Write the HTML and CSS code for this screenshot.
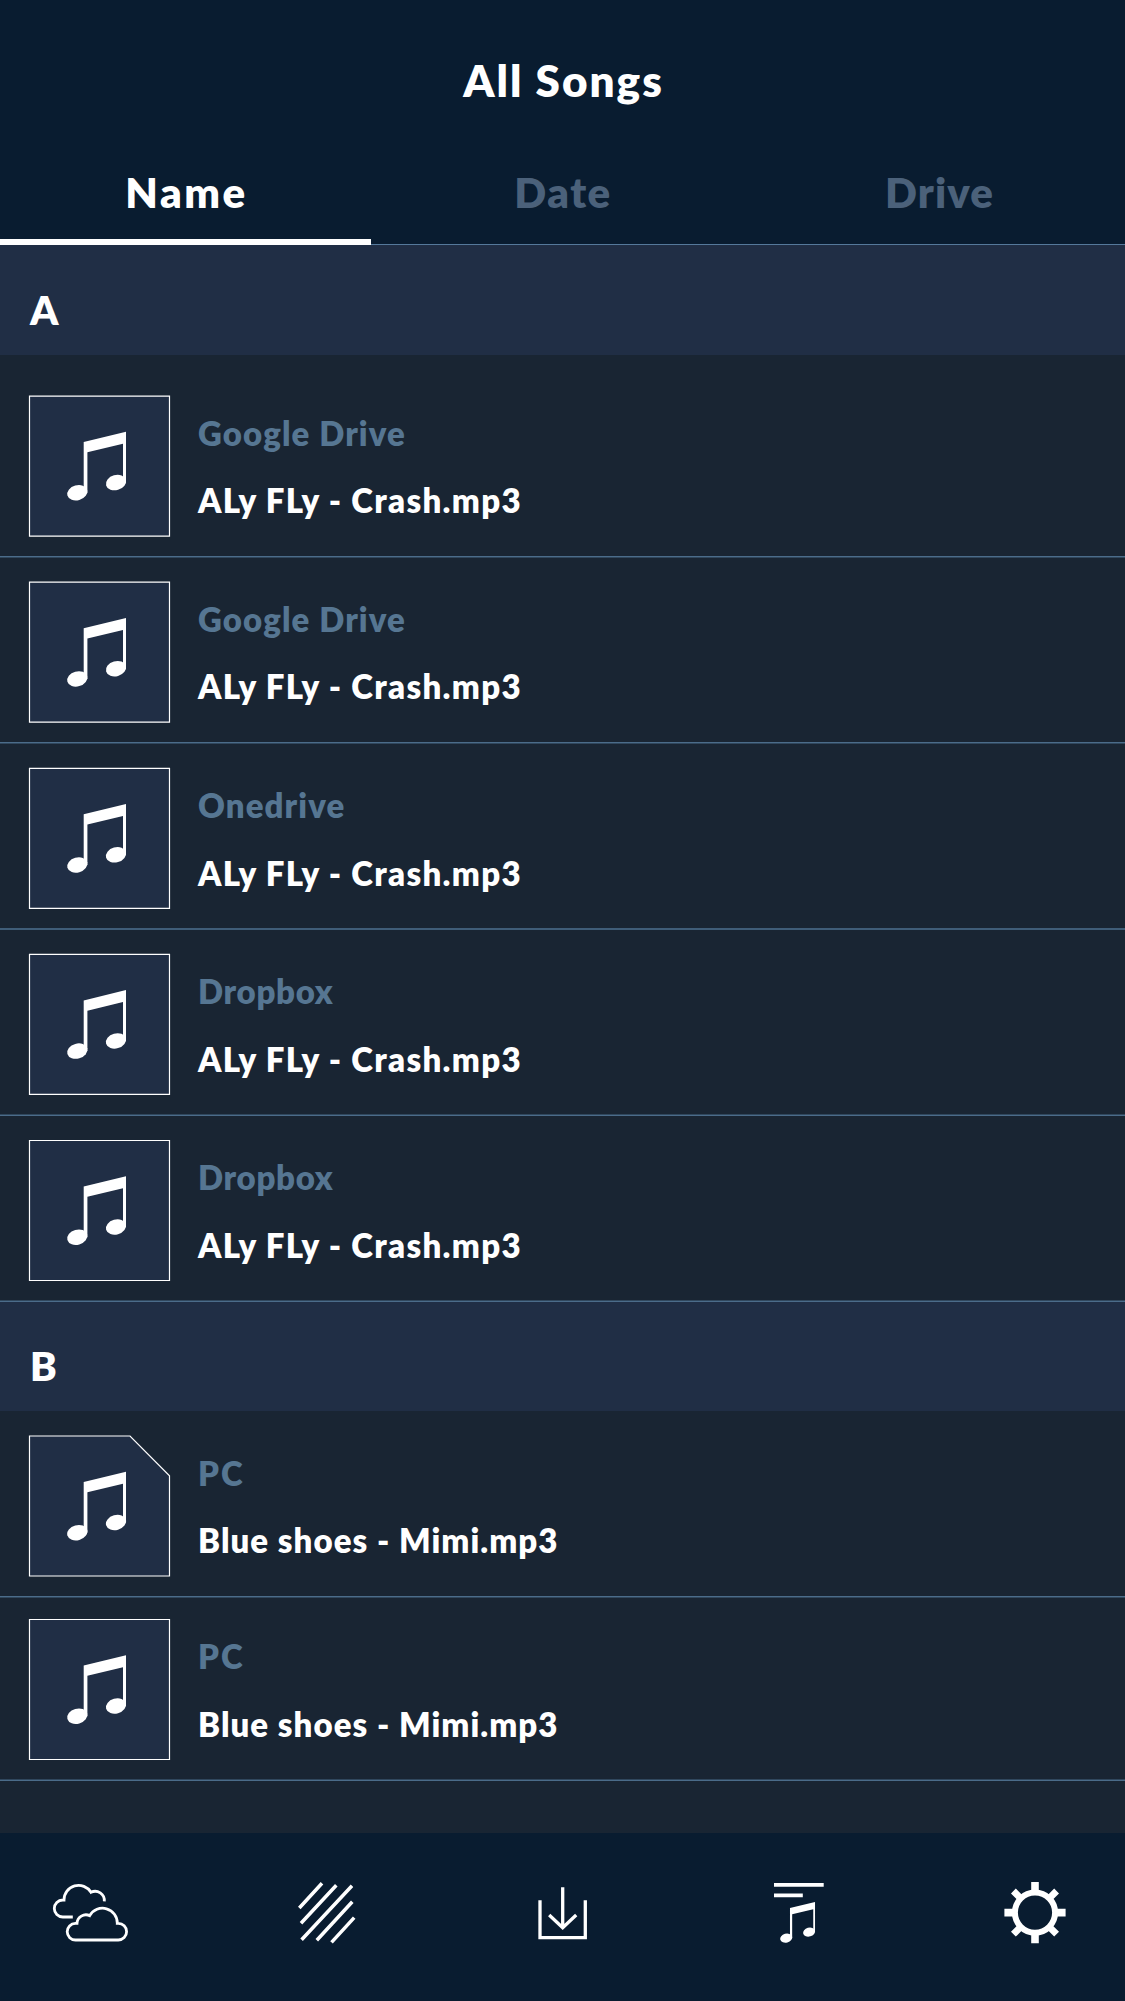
FILE: index.html
```html
<!DOCTYPE html>
<html lang="en">
<head>
<meta charset="utf-8">
<title>All Songs</title>
<link rel="stylesheet" href="styles.css">
</head>
<body>
<svg class="defs" aria-hidden="true">
  <symbol id="note" viewBox="0 0 143 144" overflow="visible">
    <path d="M54.7 47L97 36.7V87.5H94V48.7L58.4 57.3V97.7H54.7Z"/>
    <ellipse cx="48.3" cy="97.7" rx="10.3" ry="7.5" transform="rotate(-16 48.3 97.7)"/>
    <ellipse cx="87" cy="87.5" rx="10.3" ry="7.5" transform="rotate(-16 87 87.5)"/>
  </symbol>
  <symbol id="tile" viewBox="0 0 143 144" overflow="visible">
    <path class="tile-frame" d="M.5 1H140.5V141H.5Z"/>
    <use href="#note" width="143" height="144"/>
  </symbol>
  <symbol id="tile-folded" viewBox="0 0 143 144" overflow="visible">
    <path class="tile-frame" d="M.5 1H101L140.5 40.8V141H.5Z"/>
    <use href="#note" width="143" height="144"/>
  </symbol>
</svg>

<header class="header">
  <h1 class="title">All Songs</h1>
  <nav class="tabs">
    <a class="tab tab-name active">Name</a>
    <a class="tab tab-date">Date</a>
    <a class="tab tab-drive">Drive</a>
  </nav>
</header>

<main class="list">
  <h2 class="section section-first">A</h2>
  <div class="song first line-early">
    <svg class="tile"><use href="#tile" y=".05" width="143" height="144"/></svg>
    <div class="info"><p class="source">Google Drive</p><p class="name">ALy FLy - Crash.mp3</p></div>
  </div>
  <div class="song line-early">
    <svg class="tile"><use href="#tile" y=".2" width="143" height="144"/></svg>
    <div class="info"><p class="source">Google Drive</p><p class="name">ALy FLy - Crash.mp3</p></div>
  </div>
  <div class="song low">
    <svg class="tile"><use href="#tile" y=".3" width="143" height="144"/></svg>
    <div class="info"><p class="source">Onedrive</p><p class="name">ALy FLy - Crash.mp3</p></div>
  </div>
  <div class="song low line-late">
    <svg class="tile"><use href="#tile" y=".4" width="143" height="144"/></svg>
    <div class="info"><p class="source tight">Dropbox</p><p class="name">ALy FLy - Crash.mp3</p></div>
  </div>
  <div class="song low line-late">
    <svg class="tile"><use href="#tile" y=".5" width="143" height="144"/></svg>
    <div class="info"><p class="source tight">Dropbox</p><p class="name">ALy FLy - Crash.mp3</p></div>
  </div>

  <h2 class="section">B</h2>
  <div class="song pc-first line-early">
    <svg class="tile"><use href="#tile-folded" width="143" height="144"/></svg>
    <div class="info"><p class="source wide">PC</p><p class="name long">Blue shoes - Mimi.mp3</p></div>
  </div>
  <div class="song pc-last low line-late">
    <svg class="tile"><use href="#tile" y=".5" width="143" height="144"/></svg>
    <div class="info"><p class="source wide">PC</p><p class="name long">Blue shoes - Mimi.mp3</p></div>
  </div>
</main>

<footer class="toolbar">
  <svg class="icon" viewBox="0 0 80 64">
    <g class="line" stroke-width="2.8">
      <path d="M22.8 37H12.8A8.5 8.5 0 0 1 12.8 20H14A14.6 14.6 0 0 1 41 12.3A9.2 9.2 0 0 1 54.3 21.3"/>
      <path d="M25.6 60A8.3 8.3 0 0 1 25.4 43.4H27A9 9 0 0 1 39.7 35.6A14.8 14.8 0 0 1 67.3 43.4H68.3A8.3 8.3 0 0 1 68.3 60Z"/>
    </g>
  </svg>
  <svg class="icon" viewBox="0 0 80 64">
    <path class="line" stroke-width="3.5" d="M13.3 28L36 3.2M15 43.2L50.3 5.2M15.6 59.8L66 5.8M30.8 60.3L66.3 21.8M45.5 62.4L68.2 37.6"/>
  </svg>
  <svg class="icon" viewBox="0 0 80 64">
    <path class="line" stroke-width="3.3" d="M18 20.2V57.7H63.3V20.2M40.7 7.2V48M27.2 35L40.7 47.8L54.2 35"/>
  </svg>
  <svg class="icon" viewBox="0 0 80 64">
    <path class="line" stroke-width="3.6" d="M16 4.9H65.7M16 15.4H44.8"/>
    <g class="solid" transform="translate(-.4 .3) scale(.592)"><use href="#note" width="143" height="144"/></g>
  </svg>
  <svg class="icon" viewBox="0 0 80 64">
    <g class="line">
      <circle cx="41" cy="32.6" r="20.1" stroke-width="6"/>
      <path stroke-width="7.6" d="M41 2V12M41 53.2V63.2M10.4 32.6H20.4M61.6 32.6H71.6"/>
      <path stroke-width="6.8" d="M19.4 11L27 18.6M55 46.6L62.6 54.2M62.6 11L55 18.6M27 46.6L19.4 54.2"/>
    </g>
  </svg>
</footer>
</body>
</html>
```
FILE: styles.css
```css
* {
  box-sizing: border-box;
}

body {
  margin: 0;
  min-height: 2001px;
  display: flex;
  flex-direction: column;
  background: #192533;
  color: #fff;
  font-family: Lato, "Open Sans", sans-serif;
  font-weight: 800;
}

h1, h2, p {
  margin: 0;
  font-weight: inherit;
  white-space: nowrap;
}

.defs {
  display: none;
}

/* Header and sort tabs */
.header {
  height: 245px;
  padding-top: 54px;
  background: #091c30;
}

.title {
  padding-left: 2px;
  font-size: 44px;
  line-height: 52px;
  letter-spacing: 2px;
  text-align: center;
}

.tabs {
  display: grid;
  grid-template-columns: 371px 1fr 371px;
  height: 139px;
}

.tab {
  padding-top: 61px;
  border-bottom: 1px solid #55799b;
  color: #4b617a;
  font-size: 42px;
  line-height: 50px;
  text-align: center;
}

.tab.active {
  border-bottom: 6px solid #fff;
  color: #fff;
}

.tab-name {
  padding-left: 2px;
  letter-spacing: 2.5px;
}

.tab-date {
  padding-left: 1px;
  letter-spacing: 1.5px;
}

.tab-drive {
  letter-spacing: 1.1px;
}

/* Song list */
.list {
  flex: 1;
}

.section {
  height: 109px;
  padding: 40px 30px 0;
  background: #202e45;
  font-size: 40px;
  line-height: 48px;
}

.section-first {
  height: 110px;
  padding-top: 41px;
}

.song {
  --line-top: #3f5d78;
  --line-bottom: #3f5d78;
  display: flex;
  align-items: flex-end;
  gap: 26px;
  height: 186px;
  padding: 0 29px 19px;
  background: linear-gradient(var(--line-top) 50%, var(--line-bottom) 50%) bottom / 100% 2px no-repeat;
}

.song.first {
  height: 203px;
}

.song.pc-first {
  height: 187px;
}

.song.pc-last {
  height: 183px;
}

.line-early {
  --line-top: #4b6c8a;
  --line-bottom: #30475d;
}

.line-late {
  --line-top: #30475d;
  --line-bottom: #4b6c8a;
}

.tile {
  flex: none;
  width: 143px;
  height: 144px;
  overflow: visible;
  fill: #fff;
}

.tile-frame {
  fill: #202e45;
  stroke: #fff;
  stroke-width: 1.2;
}

.info {
  display: flex;
  flex-direction: column;
  gap: 27px;
  padding-bottom: 19px;
  font-size: 33px;
  line-height: 40px;
  letter-spacing: 1.1px;
}

.low .info {
  gap: 28px;
  padding-bottom: 18px;
}

.source {
  color: #567692;
}

.source.tight {
  letter-spacing: .7px;
}

.source.wide {
  letter-spacing: 2px;
}

.name {
  letter-spacing: 1.32px;
}

.name.long {
  letter-spacing: 1.04px;
}

/* Bottom toolbar */
.toolbar {
  display: flex;
  gap: 156px;
  height: 168px;
  padding: 47px 0 0 50px;
  background: #091c30;
}

.icon {
  flex: none;
  width: 80px;
  height: 64px;
}

.line {
  fill: none;
  stroke: #fff;
}

.solid {
  fill: #fff;
}
```
